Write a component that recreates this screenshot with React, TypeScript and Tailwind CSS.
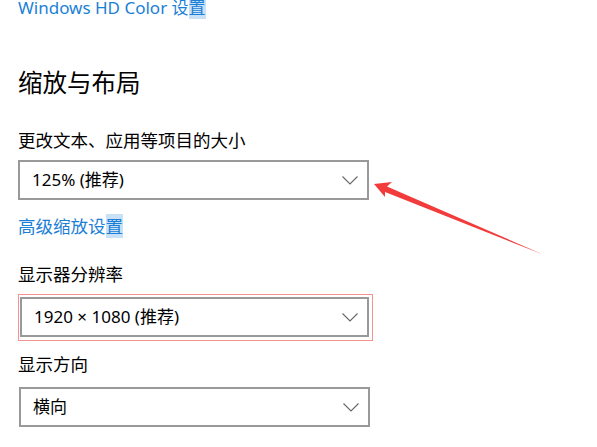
const font = { fontFamily: '"Noto Sans", "Noto Sans CJK SC", sans-serif' }

function Chevron() {
  return (
    <svg width="16" height="9" viewBox="0 0 16 9" className="shrink-0">
      <polyline points="0.5,0.5 8,8 15.5,0.5" fill="none" stroke="#666" strokeWidth="1.1" />
    </svg>
  )
}

function Dropdown({ value, className = '' }: { value: string; className?: string }) {
  return (
    <div
      className={`flex items-center justify-between h-[40px] border-2 border-[#999] bg-white pl-[12px] pr-[9px] ${className}`}
    >
      <span className="text-[17px] leading-[24px] text-black">{value}</span>
      <Chevron />
    </div>
  )
}

function Label({ children, className = '' }: { children: React.ReactNode; className?: string }) {
  return (
    <div className={`h-[24px] text-[17.5px] leading-[24px] text-black ${className}`}>{children}</div>
  )
}

export default function App() {
  return (
    <div className="relative w-[597px] h-[447px] bg-white overflow-hidden pl-[18px]" style={font}>
      <div className="-mt-[1px] h-[18px] text-[17px] leading-[18px] text-[#1c7fd6]">
        Windows HD Color 设<span className="bg-[#c9e1f6]">置</span>
      </div>

      <div className="mt-[51px] h-[30px] text-[24.5px] leading-[30px] text-black">缩放与布局</div>

      <Label className="mt-[30px]">更改文本、应用等项目的大小</Label>
      <Dropdown value="125% (推荐)" className="mt-[8px] w-[351px]" />

      <div className="mt-[14px] h-[24px] text-[17.5px] leading-[24px] text-[#1c7fd6]">
        高级缩放设<span className="bg-[#c9e1f6]">置</span>
      </div>

      <Label className="mt-[24px]">显示器分辨率</Label>
      <div className="relative mt-[11px] ml-[2px] w-[349px]">
        <Dropdown value="1920 × 1080 (推荐)" className="pl-[11px]" />
        <div className="absolute -left-[2px] -top-[3px] -right-[4px] -bottom-[4px] border-[1.5px] border-[#f59292]" />
      </div>

      <Label className="mt-[15px]">显示方向</Label>
      <Dropdown value="横向" className="mt-[11px] w-[351px] ml-[1px]" />

      <svg className="absolute left-0 top-0 pointer-events-none" width="597" height="447">
        <polygon
          points="374,184 392,182 387,186.5 543,254.5 385,192 385,197"
          fill="#f23b3b"
        />
      </svg>
    </div>
  )
}
